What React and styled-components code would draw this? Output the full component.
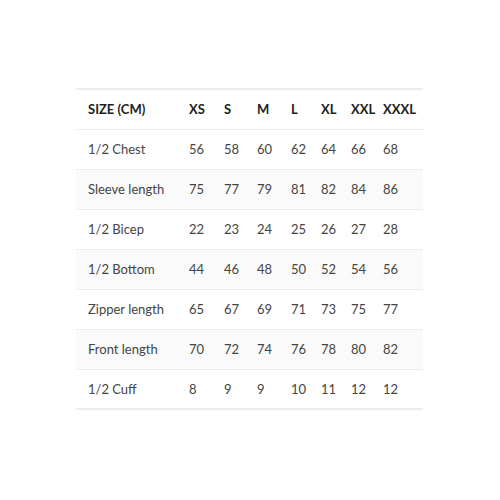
import React from 'react'
import styled, { createGlobalStyle } from 'styled-components'

const GlobalStyle = createGlobalStyle`
  html, body {
    margin: 0;
    padding: 0;
    background: #ffffff;
  }
  body {
    font-family: Lato, "Noto Sans", Arial, sans-serif;
    color: #333;
  }
`

const Page = styled.div`
  width: 500px;
  height: 500px;
  padding: 88px 0 0 76px;
  box-sizing: border-box;
`

const Table = styled.table`
  width: 347px;
  table-layout: fixed;
  border-collapse: collapse;
  border-top: 2px solid #ececec;
  border-bottom: 2px solid #ececec;
  font-size: 13px;
`

const Row = styled.tr`
  height: 40px;
  background: ${props => (props.$shaded ? '#fafafa' : '#fff')};
  border-bottom: ${props => (props.$last ? 'none' : '1px solid #ececec')};
`

const HeadCell = styled.th`
  box-sizing: border-box;
  width: ${props => props.$w}px;
  padding: 0 0 0 12px;
  text-align: left;
  font-weight: 700;
  color: #1e1e1e;
  white-space: nowrap;
`

const Cell = styled.td`
  box-sizing: border-box;
  padding: 0 0 0 12px;
  color: #444;
  white-space: nowrap;
`

const sizes = ['XS', 'S', 'M', 'L', 'XL', 'XXL', 'XXXL']
const widths = [101, 35, 33, 34, 30, 30, 32, 52]

const rows = [
  ['1/2 Chest', 56, 58, 60, 62, 64, 66, 68],
  ['Sleeve length', 75, 77, 79, 81, 82, 84, 86],
  ['1/2 Bicep', 22, 23, 24, 25, 26, 27, 28],
  ['1/2 Bottom', 44, 46, 48, 50, 52, 54, 56],
  ['Zipper length', 65, 67, 69, 71, 73, 75, 77],
  ['Front length', 70, 72, 74, 76, 78, 80, 82],
  ['1/2 Cuff', 8, 9, 9, 10, 11, 12, 12],
]

export default function App() {
  return (
    <Page>
      <GlobalStyle />
      <Table>
        <thead>
          <Row>
            <HeadCell $w={widths[0]}>SIZE (CM)</HeadCell>
            {sizes.map((s, i) => (
              <HeadCell key={s} $w={widths[i + 1]}>{s}</HeadCell>
            ))}
          </Row>
        </thead>
        <tbody>
          {rows.map((r, i) => (
            <Row key={r[0]} $shaded={i % 2 === 1} $last={i === rows.length - 1}>
              {r.map((v, j) => (
                <Cell key={j}>{v}</Cell>
              ))}
            </Row>
          ))}
        </tbody>
      </Table>
    </Page>
  )
}
